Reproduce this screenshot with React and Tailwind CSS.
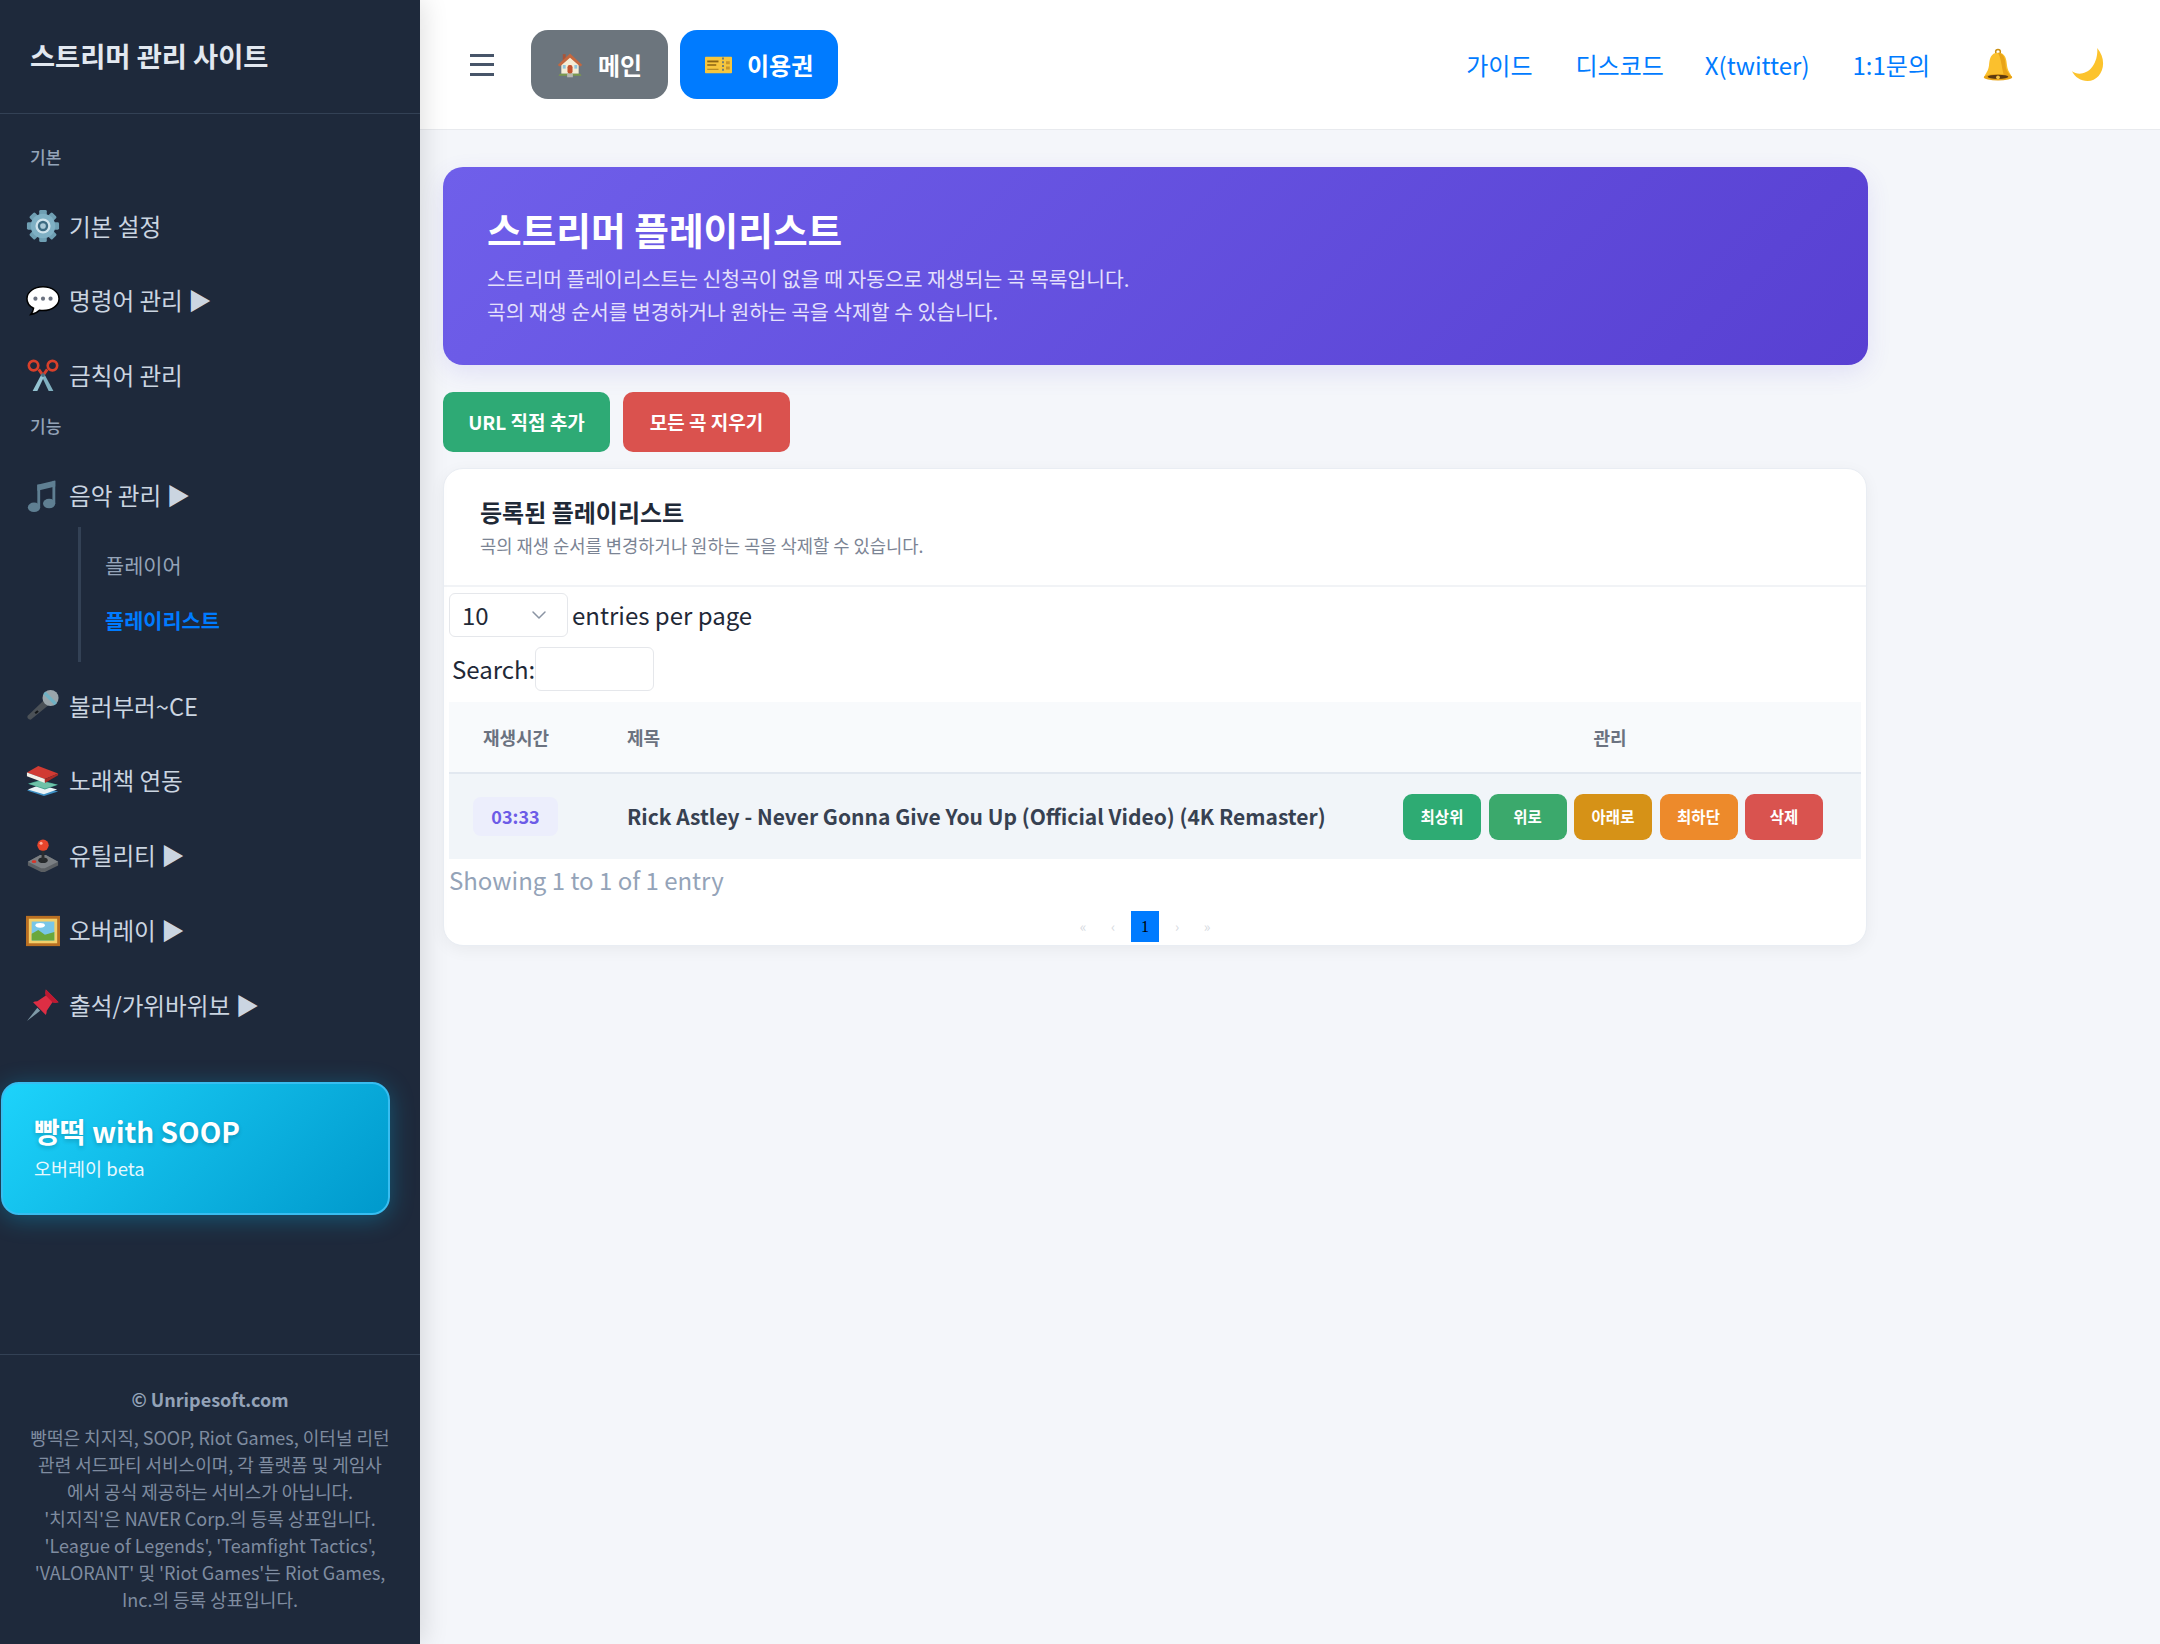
import React from "react";
import { ChevronDown } from "lucide-react";

/* emoji drawings */
const Gear = () => (
  <svg viewBox="0 0 36 36" className="w-[34px] h-[34px]">
    {[0, 45, 90, 135].map((r) => (
      <rect key={r} x="14" y="1" width="8" height="34" rx="1.5" fill="#6f9fb3" transform={`rotate(${r} 18 18)`} />
    ))}
    <circle cx="18" cy="18" r="13" fill="#7fb0c4" />
    <circle cx="18" cy="18" r="8" fill="#cfe3ec" />
    <circle cx="18" cy="18" r="5.5" fill="#3d6b82" />
    <circle cx="18" cy="18" r="3" fill="#a9c8d6" />
  </svg>
);
const Speech = () => (
  <svg viewBox="0 0 36 36" className="w-[34px] h-[34px]">
    <path d="M18 3C8.5 3 1 8.5 1 15.5c0 4.2 2.8 8 7 10.2-.3 2.2-1.3 4.6-3 6.6 3.8-.5 7-2.2 9.2-4.5 1.2.2 2.5.3 3.8.3 9.5 0 17-5.6 17-12.6S27.500 3 18 3z" fill="#fff" stroke="#000" strokeWidth="1.6" />
    <circle cx="10" cy="15.500" r="2.200" fill="#6b7280" />
    <circle cx="18" cy="15.500" r="2.200" fill="#6b7280" />
    <circle cx="26" cy="15.500" r="2.200" fill="#6b7280" />
  </svg>
);
const Scissors = () => (
  <svg viewBox="0 0 36 36" className="w-[34px] h-[34px]">
    <path d="M19 15 L29 34 L24 34 L17 19z" fill="#7fb0c0" />
    <path d="M17 15 L7 34 L12 34 L19 19z" fill="#94c3d2" />
    <path d="M13.500 11 L17 16 M22.500 11 L19 16" stroke="#d8402b" strokeWidth="3" />
    <circle cx="8" cy="7" r="5" fill="none" stroke="#d8402b" strokeWidth="2.800" />
    <circle cx="28" cy="7" r="5" fill="none" stroke="#d8402b" strokeWidth="2.800" />
    <circle cx="18" cy="17" r="2" fill="#4a6f80" />
  </svg>
);
const Music = () => (
  <svg viewBox="0 0 36 36" className="w-[34px] h-[34px]">
    <path d="M12 6 L31 1.500 V8 L12 12.500z" fill="#5f7f92" />
    <rect x="12" y="6" width="3" height="24" fill="#5f7f92" />
    <rect x="28" y="2" width="3" height="24" fill="#5f7f92" />
    <ellipse cx="8.500" cy="30" rx="6.500" ry="5" fill="#5f7f92" />
    <ellipse cx="24.500" cy="26" rx="6.500" ry="5" fill="#5f7f92" />
  </svg>
);
const Mic = () => (
  <svg viewBox="0 0 36 36" className="w-[34px] h-[34px]">
    <path d="M19 12 L1.500 28.500 Q1 31 3 32 L5 32.500 L24 17z" fill="#4b5157" />
    <path d="M9 25 l3-2.500 1.500 1.500 -3 2.500z" fill="#15181a" />
    <circle cx="26" cy="9.500" r="8.500" fill="#9aa5ab" />
    <path d="M19.500 4 L31.500 16" stroke="#6fb1c4" strokeWidth="3.500" />
  </svg>
);
const Books = () => (
  <svg viewBox="0 0 36 36" className="w-[34px] h-[34px]">
    <path d="M1 28 L14 24 L34 29 L19 34z" fill="#3d8fc4" />
    <path d="M2 27 L15 22 L33 27 L19 32z" fill="#eaf3f6" />
    <path d="M2 21 L15 17 L34 22 L20 27z" fill="#3f9e8b" />
    <path d="M3 21 L15 18 L33 22 L20 26z" fill="#6fc2a8" />
    <path d="M1 9 L13 2 L34 10 L20 16z" fill="#d13b33" />
    <path d="M1 9 L20 16 V20 L1 13z" fill="#f4f1e8" />
    <path d="M20 16 L34 10 V12 L20 20z" fill="#a92b26" />
  </svg>
);
const Joystick = () => (
  <svg viewBox="0 0 36 36" className="w-[34px] h-[34px]">
    <path d="M2 24 L15 17 H21 L34 24 V28 L20 35 H16 L2 28z" fill="#5b5f63" />
    <path d="M2 24 L15 17 H21 L34 24 L20 31 H16z" fill="#7b7f83" />
    <ellipse cx="18" cy="22.500" rx="5" ry="3" fill="#26292b" />
    <rect x="16.500" y="10" width="3" height="12" fill="#2b2e30" />
    <circle cx="18" cy="6.500" r="6" fill="#e8452c" />
    <circle cx="16" cy="4.500" r="1.600" fill="#ffb09e" />
    <ellipse cx="8.500" cy="24" rx="2.500" ry="1.500" fill="#d8362a" />
  </svg>
);
const Frame = () => (
  <svg viewBox="0 0 36 36" className="w-[34px] h-[34px]">
    <rect x="0" y="2" width="36" height="32" fill="#b96f22" />
    <rect x="3" y="5" width="30" height="26" fill="#f3d06a" />
    <rect x="6" y="8" width="24" height="20" fill="#78c6e8" />
    <path d="M6 28 V21 L13 17 L20 22 L30 19 V28z" fill="#6aa83c" />
    <ellipse cx="15" cy="12" rx="5" ry="2.500" fill="#fff" />
  </svg>
);
const Pin = () => (
  <svg viewBox="0 0 36 36" className="w-[34px] h-[34px]">
    <path d="M1 35 L12 21 L15 24z" fill="#7f9aa8" />
    <path d="M21 1.500 Q20 6 21 8 L12 14 Q9 14 7.500 15 L21 28.500 Q22 26 22 24 L28 15 Q31 16 34.500 15z" fill="#dd2e44" />
    <path d="M21 1.500 L34.500 15 Q31 16 28 15 L21 8 Q20 6 21 1.500z" fill="#be1931" />
  </svg>
);
const House = () => (
  <svg viewBox="0 0 36 36" className="w-[26px] h-[26px]">
    <rect x="8" y="3" width="4" height="9" fill="#a8553a" />
    <path d="M6 16 L18 5 L30 16 V30 H6z" fill="#f5edd6" />
    <path d="M1 18 L18 2 L35 18 L32 20 L18 8 L4 20z" fill="#c4673f" />
    <rect x="14.500" y="18" width="7" height="12" rx="3" fill="#c4532f" />
    <rect x="8" y="18" width="4" height="5" fill="#8ec5de" />
    <rect x="24" y="18" width="4" height="5" fill="#8ec5de" />
    <path d="M4 30 H32 L34 33 H2z" fill="#7b9a4c" />
    <rect x="14" y="30" width="8" height="5" fill="#b7b7b0" />
  </svg>
);
const Ticket = () => (
  <svg viewBox="0 0 36 26" className="w-[27px] h-[20px]">
    <rect x="0" y="2" width="36" height="22" rx="1" fill="#f6c63e" />
    <rect x="3" y="7" width="15" height="2.500" fill="#8a6414" />
    <rect x="3" y="12" width="12" height="2" fill="#8a6414" />
    <rect x="3" y="18" width="15" height="1.600" fill="#b48a26" />
    <path d="M24 3 V23" stroke="#4a6a88" strokeWidth="2" strokeDasharray="2.500 2.500" />
    <rect x="28" y="8" width="5" height="4" fill="#c9962a" />
    <rect x="28" y="15" width="5" height="4" fill="#c9962a" />
  </svg>
);
const Bell = () => (
  <svg viewBox="0 0 36 36" className="w-[34px] h-[34px]">
    <circle cx="18" cy="4" r="2.500" fill="none" stroke="#c98f12" strokeWidth="1.600" />
    <path d="M18 5 C10 5 9 12 8.500 18 C8 24 5 27 3 31 H33 C31 27 28 24 27.500 18 C27 12 26 5 18 5z" fill="#fbc02d" />
    <path d="M18 5 C24 5 26 12 26 18 C26.500 24 29 27 33 31 H25 C22 24 22 12 18 5z" fill="#e8a317" />
    <ellipse cx="18" cy="31" rx="15" ry="3.500" fill="#e8a317" />
    <ellipse cx="18" cy="30.500" rx="11" ry="2.200" fill="#5c3a10" />
    <circle cx="18" cy="31" r="2" fill="#f5c342" />
  </svg>
);
const Moon = () => (
  <svg viewBox="0 0 36 36" className="w-[35px] h-[35px]">
    <path d="M27 1 C31 6 33 11 33 17 C33 27 26 35 17 35 C10 35 4 31 1 25 C4 27 8 28 12 27 C22 25 28 13 27 1z" fill="#fcc32c" />
  </svg>
);

const NavItem = ({ icon, children }) => (
  <a className="flex items-center h-[74.75px] pl-[26px] gap-[9px] text-[23.6px] text-[#cbd5e1]">
    <span className="w-[34px] h-[34px] flex items-center justify-center shrink-0">{icon}</span>
    <span>{children}</span>
  </a>
);

const Label = ({ className, children }) => (
  <div className={`px-[30px] text-[17px] font-medium text-[#94a3b8] ${className}`}>{children}</div>
);

const ActionBtn = ({ color, children }) => (
  <button className={`w-[78px] h-[46px] rounded-[9px] text-[15.5px] font-bold text-white ${color}`}>{children}</button>
);

export default function App() {
  return (
    <div className="flex w-[2160px] h-[1644px] overflow-hidden bg-[#f4f6fa] font-['Noto_Sans_CJK_KR','Noto_Sans',sans-serif]">
      <aside className="relative z-10 flex flex-col w-[420px] h-full shrink-0 bg-[#1e293b] shadow-[4px_0_24px_rgba(0,0,0,0.12)]">
        <div className="flex items-center h-[114px] px-[30px] pb-[3px] border-b border-[#334155]">
          <h1 className="text-[27.300px] font-bold text-[#e2e8f0]">스트리머 관리 사이트</h1>
        </div>

        <Label className="mt-[25px] h-[36px] leading-[36px]">기본</Label>
        <nav className="mt-[14px]">
          <NavItem icon={<Gear />}>기본 설정</NavItem>
          <NavItem icon={<Speech />}>명령어 관리 ▶</NavItem>
          <NavItem icon={<Scissors />}>금칙어 관리</NavItem>
        </nav>
        <Label className="h-[26px] leading-[26px]">기능</Label>
        <nav className="mt-[19px]">
          <NavItem icon={<Music />}>음악 관리 ▶</NavItem>
          <div className="ml-[78px] -mt-[6px] mb-[7px] h-[135px] pt-[11px] pl-[24px] border-l-[3px] border-[#334155] text-[20.800px]">
            <div className="flex items-center h-[55px] text-[#94a3b8]">플레이어</div>
            <div className="flex items-center h-[55px] font-bold text-[#007bff]">플레이리스트</div>
          </div>
          <NavItem icon={<Mic />}>불러부러~CE</NavItem>
          <NavItem icon={<Books />}>노래책 연동</NavItem>
          <NavItem icon={<Joystick />}>유틸리티 ▶</NavItem>
          <NavItem icon={<Frame />}>오버레이 ▶</NavItem>
          <NavItem icon={<Pin />}>출석/가위바위보 ▶</NavItem>
        </nav>

        <div className="mt-[39px] ml-px w-[389px] h-[133px] pl-[31px] pt-[27px] rounded-[18px] border-2 border-[#38bdf0] bg-[linear-gradient(135deg,#1dd3fb,#0099cc)] shadow-[0_4px_24px_rgba(0,200,255,0.3)]">
          <div className="text-[28px] leading-[40px] font-bold text-white [text-shadow:0_2px_4px_rgba(0,0,0,0.2)]">빵떡 with SOOP</div>
          <div className="mt-[3px] text-[18.500px] leading-[28px] text-[#e6f8fe]">오버레이 beta</div>
        </div>

        <footer className="mt-auto h-[290px] pt-[31px] px-[30px] border-t border-[#334155] text-center text-[18px] leading-[27px] text-[#7f8ca0]">
          <div className="font-bold text-[#94a3b8] mb-[11px]">© Unripesoft.com</div>
          <p>
            빵떡은 치지직, SOOP, Riot Games, 이터널 리턴 관련 서드파티 서비스이며, 각 플랫폼 및 게임사에서 공식 제공하는 서비스가 아닙니다.
            <br />
            '치지직'은 NAVER Corp.의 등록 상표입니다.
            <br />
            'League of Legends', 'Teamfight Tactics', 'VALORANT' 및 'Riot Games'는 Riot Games, Inc.의 등록 상표입니다.
          </p>
        </footer>
      </aside>

      <div className="flex-1 min-w-0">
        <header className="flex items-center h-[130px] pl-[50px] pr-[54px] bg-white border-b border-[#e8eaee]">
          <div className="flex flex-col gap-[6.500px] w-[24px] mr-[37px]">
            <span className="h-[3px] bg-[#475569]" />
            <span className="h-[3px] bg-[#475569]" />
            <span className="h-[3px] bg-[#475569]" />
          </div>
          <button className="flex items-center gap-[15px] h-[69px] w-[137px] pl-[26px] rounded-[17px] bg-[#6c757d] text-[24px] font-bold text-white">
            <House />
            메인
          </button>
          <button className="ml-[12px] flex items-center gap-[15px] h-[69px] w-[158px] pl-[25px] rounded-[17px] bg-[#007bff] text-[24px] font-bold text-white">
            <Ticket />
            이용권
          </button>
          <nav className="ml-auto flex items-center text-[24px] text-[#007bff]">
            <a className="mr-[43px]">가이드</a>
            <a className="mr-[41px]">디스코드</a>
            <a className="mr-[43px]">X(twitter)</a>
            <a className="mr-[51px]">1:1문의</a>
            <span className="mr-[56px]"><Bell /></span>
            <Moon />
          </nav>
        </header>

        <main className="w-[1448px] pl-[23px] pt-[37px]">
          <section className="h-[198px] pl-[44px] pt-[37px] rounded-[20px] bg-[linear-gradient(135deg,#6f5fea,#5840d2)] shadow-[0_8px_24px_rgba(90,70,210,0.12)]">
            <h2 className="text-[37.700px] leading-[50px] font-bold text-white">스트리머 플레이리스트</h2>
            <p className="mt-[8px] text-[20.400px] leading-[33px] text-[#e4e0fb]">
              스트리머 플레이리스트는 신청곡이 없을 때 자동으로 재생되는 곡 목록입니다.
              <br />
              곡의 재생 순서를 변경하거나 원하는 곡을 삭제할 수 있습니다.
            </p>
          </section>

          <div className="flex gap-[13px] mt-[27px]">
            <button className="w-[167px] h-[60px] rounded-[10px] bg-[#2eaa75] text-[19px] font-bold text-white">URL 직접 추가</button>
            <button className="w-[167px] h-[60px] rounded-[10px] bg-[#da524e] text-[19px] font-bold text-white">모든 곡 지우기</button>
          </div>

          <section className="mt-[16px] w-[1424px] h-[478px] rounded-[20px] bg-white border border-[#e9edf3] shadow-[0_4px_16px_rgba(0,0,0,0.05)] overflow-hidden">
            <div className="h-[118px] pl-[36px] pt-[25px] border-b-2 border-[#f1f3f6]">
              <h3 className="text-[24px] leading-[36px] font-bold text-[#1f2937]">등록된 플레이리스트</h3>
              <p className="mt-[2px] text-[17.700px] leading-[26px] text-[#7b8494]">곡의 재생 순서를 변경하거나 원하는 곡을 삭제할 수 있습니다.</p>
            </div>

            <div className="px-[5px]">
              <div className="flex items-center mt-[6px] text-[24px] text-[#1f2937]">
                <div className="flex items-center justify-between w-[119px] h-[44px] pl-[12px] pr-[16px] rounded-[6px] border border-[#e5e7eb]">
                  <span>10</span>
                  <ChevronDown className="w-[24px] h-[24px] text-[#8a94a3]" strokeWidth={1.500} />
                </div>
                <span className="ml-[4px]">entries per page</span>
              </div>
              <div className="flex items-center mt-[10px] text-[24px] text-[#1f2937]">
                <span className="ml-[3px]">Search:</span>
                <div className="w-[119px] h-[44px] rounded-[6px] border border-[#e5e7eb]" />
              </div>

              <div className="flex items-center h-[72px] mt-[11px] bg-[#f8fafc] border-b-2 border-[#e2e8f0] text-[18px] font-bold text-[#6b7280]">
                <div className="w-[133px] text-center pl-[1px]">재생시간</div>
                <div className="flex-1 pl-[45px]">제목</div>
                <div className="w-[498px] text-center pr-[4px]">관리</div>
              </div>
              <div className="flex items-center h-[85px] bg-[#f1f5f9]">
                <div className="w-[133px] flex justify-center">
                  <span className="flex items-center justify-center w-[85px] h-[39px] rounded-[8px] bg-[#eceefc] text-[18px] font-bold text-[#6c5ce7]">03:33</span>
                </div>
                <div className="flex-1 pl-[45px] text-[21px] font-bold text-[#374151]">Rick Astley - Never Gonna Give You Up (Official Video) (4K Remaster)</div>
                <div className="flex gap-[7.500px] mr-[38px]">
                  <ActionBtn color="bg-[#2eab73]">최상위</ActionBtn>
                  <ActionBtn color="bg-[#3ba96c]">위로</ActionBtn>
                  <ActionBtn color="bg-[#d69217]">아래로</ActionBtn>
                  <ActionBtn color="bg-[#ed8a2b]">최하단</ActionBtn>
                  <ActionBtn color="bg-[#d9534f]">삭제</ActionBtn>
                </div>
              </div>

              <div className="mt-[3px] text-[24px] leading-[36px] text-[#94a3b8]">Showing 1 to 1 of 1 entry</div>
              <div className="flex justify-center items-center mt-[13px] pr-[20px] text-[14px] text-[#d5d9e0]">
                <span className="w-[30px] text-center">«</span>
                <span className="w-[30px] text-center">‹</span>
                <span className="flex items-center justify-center w-[28px] h-[31px] mx-[3px] bg-[#007bff] text-[16px] text-black font-['Liberation_Serif',serif]">1</span>
                <span className="w-[30px] text-center">›</span>
                <span className="w-[30px] text-center">»</span>
              </div>
            </div>
          </section>
        </main>
      </div>
    </div>
  );
}
